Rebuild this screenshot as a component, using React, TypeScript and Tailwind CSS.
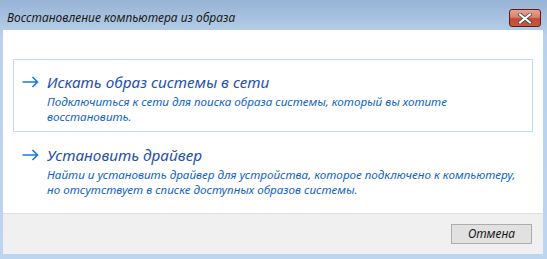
import React from "react";

const font = { fontFamily: '"Noto Sans", "Open Sans", sans-serif' };

interface CommandLinkProps {
  title: string;
  description: React.ReactNode;
  focused?: boolean;
}

const Arrow: React.FC = () => (
  <svg width="17" height="12" viewBox="0 0 17 12" className="shrink-0 mt-[4px]">
    <path d="M0.5 6H15.5M10.5 1L15.5 6L10.5 11" fill="none" stroke="#1e78d7" strokeWidth="1.6" />
  </svg>
);

const CommandLink: React.FC<CommandLinkProps> = ({ title, description, focused }) => (
  <div
    className={`flex gap-[8px] pl-[8px] pr-[12px] pt-[12px] pb-[7px] border ${
      focused ? "border-[#c2dcf4]" : "border-transparent"
    }`}
  >
    <Arrow />
    <div className="flex flex-col">
      <div className="text-[15.3px] leading-[20px] italic text-[#2650b0]">{title}</div>
      <div className="mt-[2px] text-[11.65px] leading-[15px] italic text-[#0f63c9]">{description}</div>
    </div>
  </div>
);

export default function App() {
  return (
    <div
      className="w-[547px] h-[259px] flex flex-col bg-[linear-gradient(180deg,#97b3d5_0%,#b9d1ea_14%,#bdd5ee_100%)]"
      style={font}
    >
      {/* title bar */}
      <div className="h-[30px] flex items-start justify-between pl-[7px] pr-[6px]">
        <div className="mt-[10px] text-[12px] leading-[16px] italic text-[#1a1a1a]">
          Восстановление компьютера из образа
        </div>
        <div className="mt-[9px] w-[32px] h-[18px] rounded-[3px] border border-[#5e1b17] bg-[linear-gradient(180deg,#e8a294_0%,#d9806c_45%,#c24a33_55%,#c7573f_100%)] flex items-center justify-center">
          <svg width="14" height="11" viewBox="0 0 14 11">
            <path d="M2 1.5L12 9.5M12 1.5L2 9.5" stroke="#4a4a4a" strokeWidth="3.6" strokeLinecap="square" />
            <path d="M2 1.5L12 9.5M12 1.5L2 9.5" stroke="#ffffff" strokeWidth="2" strokeLinecap="square" />
          </svg>
        </div>
      </div>

      {/* body */}
      <div className="ml-[3px] mr-[4px] flex-1 bg-white flex flex-col px-[10px] pt-[29px]">
        <CommandLink
          focused
          title="Искать образ системы в сети"
          description={
            <>
              Подключиться к сети для поиска образа системы, который вы хотите
              <br />
              восстановить.
            </>
          }
        />
        <CommandLink
          title="Установить драйвер"
          description={
            <>
              Найти и установить драйвер для устройства, которое подключено к компьютеру,
              <br />
              но отсутствует в списке доступных образов системы.
            </>
          }
        />
      </div>

      {/* footer */}
      <div className="ml-[3px] mr-[4px] h-[41px] bg-[#f0f0f0] border-t border-[#dfdfdf] flex items-start justify-end pr-[11px] pt-[10px]">
        <button className="w-[81px] h-[20px] bg-[#e1e1e1] border border-[#adadad] text-[12px] italic text-[#1a1a1a] leading-none">
          Отмена
        </button>
      </div>
      <div className="h-[5px]" />
    </div>
  );
}
